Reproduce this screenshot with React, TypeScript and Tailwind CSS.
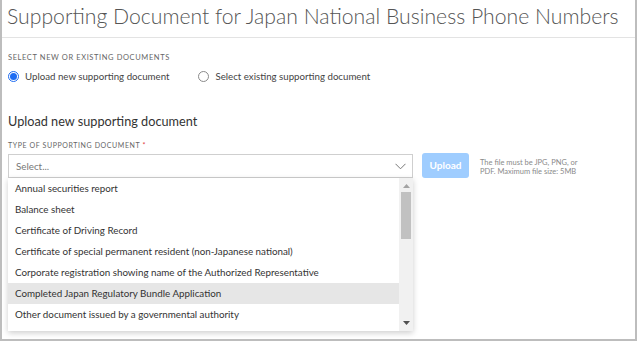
import React from 'react';

const options = [
  'Annual securities report',
  'Balance sheet',
  'Certificate of Driving Record',
  'Certificate of special permanent resident (non-Japanese national)',
  'Corporate registration showing name of the Authorized Representative',
  'Completed Japan Regulatory Bundle Application',
  'Other document issued by a governmental authority',
];

function Radio({ checked }: { checked?: boolean }) {
  return checked ? (
    <span className="w-[11px] h-[11px] rounded-full border border-[#1e6cf2] flex items-center justify-center bg-white">
      <span className="w-[7px] h-[7px] rounded-full bg-[#1e6cf2]" />
    </span>
  ) : (
    <span className="w-[11px] h-[11px] rounded-full border border-[#8a8a8a] bg-white" />
  );
}

export default function App() {
  const font = { fontFamily: '"Lato", "Open Sans", sans-serif' };
  return (
    <div style={font} className="w-[637px] h-[341px] bg-white border-x-2 border-b-2 border-[#bdbdbd] overflow-hidden text-[#333]">
      <div className="h-[38px] border-b border-[#e3e3e3] pl-[5px] pt-[2px]">
        <h1 className="text-[21.2px] font-light text-[#555] leading-[28px] whitespace-nowrap">
          Supporting Document for Japan National Business Phone Numbers
        </h1>
      </div>

      <div className="pl-[6px] pt-[15px]">
        <div className="text-[7.5px] tracking-[0.6px] text-[#666] leading-[10px]">SELECT NEW OR EXISTING DOCUMENTS</div>
        <div className="flex items-center mt-[6px] text-[9.7px] text-[#444] leading-[14px]">
          <label className="flex items-center gap-[6px]">
            <Radio checked />
            <span>Upload new supporting document</span>
          </label>
          <label className="flex items-center gap-[6px] ml-[29px]">
            <Radio />
            <span>Select existing supporting document</span>
          </label>
        </div>

        <h2 className="text-[12.7px] text-[#333] mt-[30px] leading-[16px]">Upload new supporting document</h2>

        <div className="text-[7px] tracking-[0.6px] text-[#666] mt-[11px] leading-[10px]">
          TYPE OF SUPPORTING DOCUMENT <span className="text-[#e03a3a]">*</span>
        </div>

        <div className="flex items-start mt-[4px]">
          <div className="relative w-[405px]">
            <div className="h-[24px] border border-[#cfcfcf] flex items-center justify-between pl-[7px] pr-[6px] text-[9.8px] text-[#777]">
              <span>Select...</span>
              <svg width="11" height="7" viewBox="0 0 11 7" fill="none" stroke="#777" strokeWidth="1">
                <path d="M0.5 0.8 L5.5 5.8 L10.5 0.8" />
              </svg>
            </div>
            <div className="absolute left-0 top-[24px] w-[405px] h-[153px] bg-white shadow-[0_2px_6px_rgba(0,0,0,0.2)] flex">
              <ul className="flex-1 text-[9.8px] text-[#333]">
                {options.map((o, i) => (
                  <li
                    key={o}
                    className={`h-[21px] flex items-center pl-[7px] ${i === 5 ? 'bg-[#e6e6e6]' : ''}`}
                  >
                    {o}
                  </li>
                ))}
              </ul>
              <div className="w-[14px] bg-[#f1f1f1] flex flex-col items-center">
                <svg width="7" height="4" viewBox="0 0 7 4" className="mt-[6px]">
                  <path d="M0 4 L3.5 0 L7 4 Z" fill="#a3a3a3" />
                </svg>
                <div className="w-[10px] h-[47px] bg-[#c1c1c1] mt-[4px]" />
                <div className="flex-1" />
                <svg width="7" height="4" viewBox="0 0 7 4" className="mb-[6px]">
                  <path d="M0 0 L7 0 L3.5 4 Z" fill="#505050" />
                </svg>
              </div>
            </div>
          </div>

          <button className="ml-[9px] -mt-[1px] w-[47px] h-[25px] rounded-[3px] bg-[#9fcdff] text-white text-[10px] font-bold">
            Upload
          </button>
          <div className="ml-[11px] mt-[4px] text-[7.5px] leading-[9px] text-[#8a8a8a]">
            The file must be JPG, PNG, or
            <br />
            PDF. Maximum file size: 5MB
          </div>
        </div>
      </div>
    </div>
  );
}
